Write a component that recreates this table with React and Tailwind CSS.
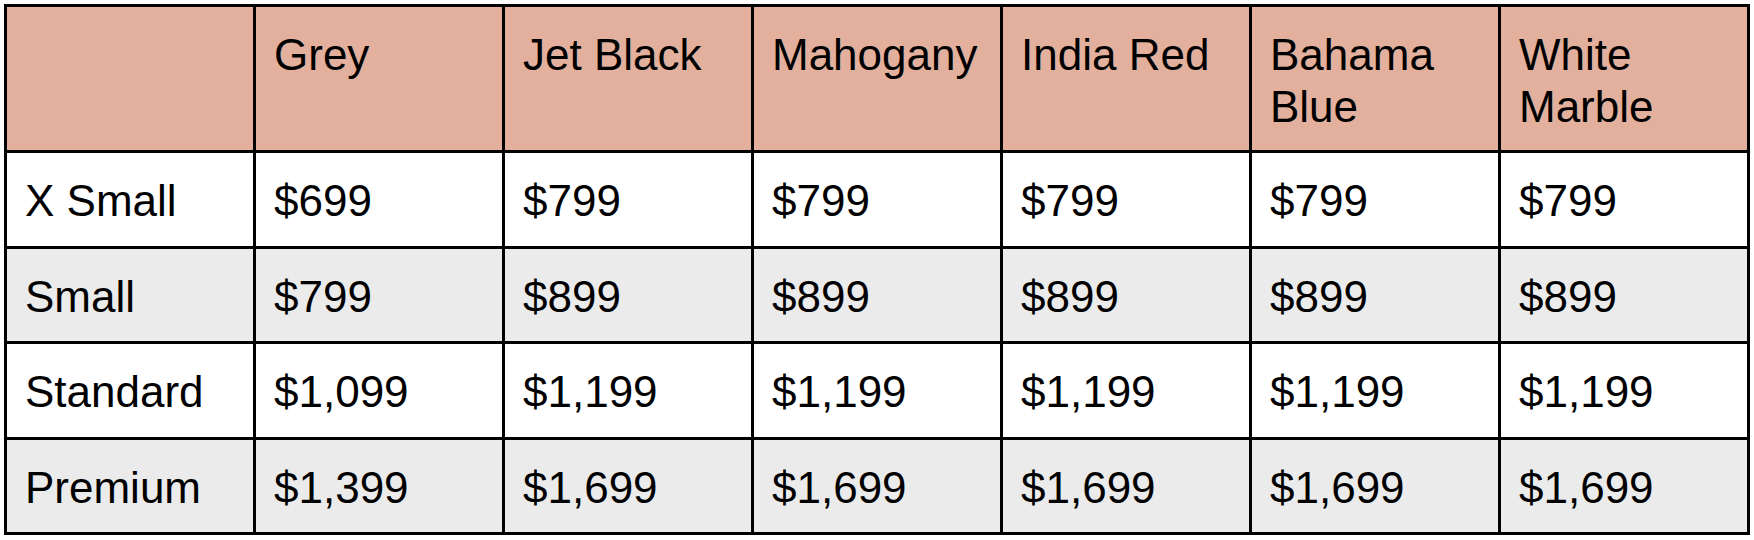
const colors = ['Grey', 'Jet Black', 'Mahogany', 'India Red', 'Bahama Blue', 'White Marble'];

const rows = [
  { size: 'X Small', prices: ['$699', '$799', '$799', '$799', '$799', '$799'], bg: 'bg-white' },
  { size: 'Small', prices: ['$799', '$899', '$899', '$899', '$899', '$899'], bg: 'bg-[#ebebeb]' },
  { size: 'Standard', prices: ['$1,099', '$1,199', '$1,199', '$1,199', '$1,199', '$1,199'], bg: 'bg-white' },
  { size: 'Premium', prices: ['$1,399', '$1,699', '$1,699', '$1,699', '$1,699', '$1,699'], bg: 'bg-[#ebebeb]' },
];

function Cell({ children, className }) {
  return (
    <div className={`pl-[18px] pr-[6px] pt-[22px] text-[44px] leading-[52px] text-black ${className}`}>
      {children}
    </div>
  );
}

export default function App() {
  return (
    <div className="min-h-screen bg-white p-[4px] font-['Liberation_Sans',Arial,sans-serif]">
      <div className="grid w-max grid-cols-[repeat(7,246px)] grid-rows-[143px_93px_92px_93px_92px] gap-[3px] bg-black p-[3px]">
        <Cell className="bg-[#e2b09d]" />
        {colors.map((c) => (
          <Cell key={c} className="bg-[#e2b09d]">
            {c}
          </Cell>
        ))}
        {rows.map((r) => (
          <>
            <Cell key={r.size} className={r.bg}>
              {r.size}
            </Cell>
            {r.prices.map((p, i) => (
              <Cell key={r.size + i} className={r.bg}>
                {p}
              </Cell>
            ))}
          </>
        ))}
      </div>
    </div>
  );
}
